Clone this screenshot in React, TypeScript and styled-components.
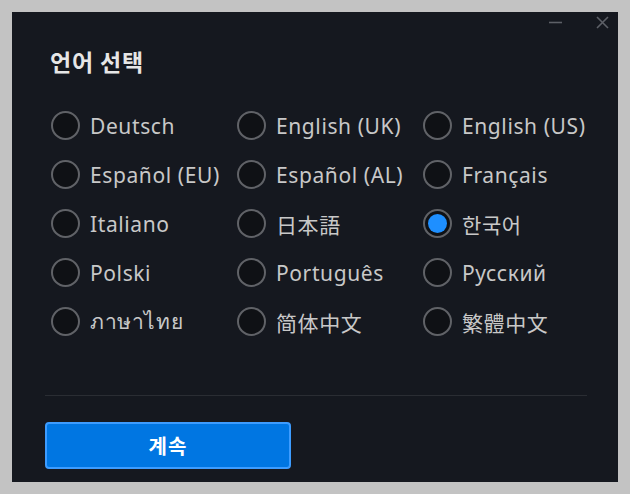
import React, { useState } from "react";
import styled, { createGlobalStyle } from "styled-components";

const GlobalStyle = createGlobalStyle`
  html, body {
    margin: 0;
    padding: 0;
    background: #c3c3c3;
  }
  body {
    font-family: "Noto Sans", "Noto Sans CJK KR", sans-serif;
  }
`;

const Page = styled.div`
  padding: 12px;
  width: 606px;
`;

const Dialog = styled.div`
  width: 606px;
  height: 470px;
  box-sizing: border-box;
  background: #15181f;
  display: flex;
  flex-direction: column;
  padding: 0 31px 13px 33px;
`;

const WindowBar = styled.div`
  height: 20px;
  display: flex;
  justify-content: flex-end;
  align-items: center;
  gap: 34px;
  margin-right: -22px;
`;

const WinButton = styled.button`
  all: unset;
  width: 13px;
  height: 13px;
  display: flex;
  color: #5d6067;
`;

const Title = styled.h1`
  margin: 13px 0 0 5px;
  font-family: "Noto Sans CJK KR", "Noto Sans", sans-serif;
  font-size: 23px;
  letter-spacing: 0.8px;
  line-height: 32px;
  font-weight: 700;
  color: #e6e6e6;
`;

const Grid = styled.div`
  margin: 34px 0 0 6px;
  display: grid;
  grid-template-columns: repeat(3, 186px);
  grid-auto-rows: 29px;
  row-gap: 20px;
`;

const Option = styled.label`
  display: flex;
  align-items: center;
  gap: 10px;
  cursor: pointer;
  font-family: "Noto Sans", "Noto Sans CJK KR", sans-serif;
  font-size: 21px;
  letter-spacing: 0.6px;
  color: #c8c8c8;
  white-space: nowrap;
`;

const Radio = styled.span<{ $checked: boolean }>`
  box-sizing: border-box;
  width: 29px;
  height: 29px;
  flex: none;
  border-radius: 50%;
  border: 2px solid #606267;
  background: #0f1115;
  display: flex;
  align-items: center;
  justify-content: center;
  &::after {
    content: "";
    width: 19px;
    height: 19px;
    border-radius: 50%;
    background: #1e8fff;
    display: ${(p) => (p.$checked ? "block" : "none")};
  }
`;

const Separator = styled.hr`
  margin: 59px 0 0;
  border: none;
  height: 1px;
  background: #2a2d33;
`;

const Footer = styled.div`
  margin-top: auto;
  display: flex;
`;

const PrimaryButton = styled.button`
  box-sizing: border-box;
  width: 246px;
  height: 47px;
  border: 2px solid #3d9cff;
  border-radius: 4px;
  background: #0076e2;
  color: #ffffff;
  font-family: "Noto Sans CJK KR", "Noto Sans", sans-serif;
  font-size: 20px;
  letter-spacing: 1px;
  font-weight: 700;
  cursor: pointer;
`;

const languages = [
  "Deutsch",
  "English (UK)",
  "English (US)",
  "Español (EU)",
  "Español (AL)",
  "Français",
  "Italiano",
  "日本語",
  "한국어",
  "Polski",
  "Português",
  "Русский",
  "ภาษาไทย",
  "简体中文",
  "繁體中文",
];

export default function App() {
  const [selected, setSelected] = useState("한국어");
  return (
    <>
      <GlobalStyle />
      <Page>
        <Dialog>
          <WindowBar>
            <WinButton aria-label="minimize">
              <svg width="13" height="13" viewBox="0 0 13 13">
                <line x1="0" y1="6.5" x2="13" y2="6.5" stroke="currentColor" strokeWidth="1.6" />
              </svg>
            </WinButton>
            <WinButton aria-label="close">
              <svg width="13" height="13" viewBox="0 0 13 13">
                <path d="M1 1 L12 12 M12 1 L1 12" stroke="currentColor" strokeWidth="1.6" fill="none" />
              </svg>
            </WinButton>
          </WindowBar>
          <Title>언어 선택</Title>
          <Grid>
            {languages.map((l) => (
              <Option key={l} onClick={() => setSelected(l)}>
                <Radio $checked={selected === l} />
                <span>{l}</span>
              </Option>
            ))}
          </Grid>
          <Separator />
          <Footer>
            <PrimaryButton>계속</PrimaryButton>
          </Footer>
        </Dialog>
      </Page>
    </>
  );
}
